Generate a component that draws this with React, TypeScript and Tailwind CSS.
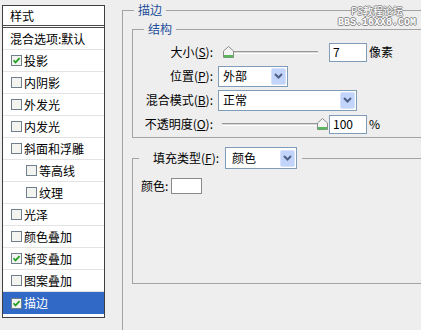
import React from "react";

type Row = { label: string; checked: boolean | null; indent?: boolean; selected?: boolean };

const ROWS: Row[] = [
  { label: "混合选项:默认", checked: null },
  { label: "投影", checked: true },
  { label: "内阴影", checked: false },
  { label: "外发光", checked: false },
  { label: "内发光", checked: false },
  { label: "斜面和浮雕", checked: false },
  { label: "等高线", checked: false, indent: true },
  { label: "纹理", checked: false, indent: true },
  { label: "光泽", checked: false },
  { label: "颜色叠加", checked: false },
  { label: "渐变叠加", checked: true },
  { label: "图案叠加", checked: false },
  { label: "描边", checked: true, selected: true },
];

const CheckBox = ({ checked }: { checked: boolean }) => (
  <svg width="11" height="11" viewBox="0 0 11 11" className="shrink-0">
    <rect x="0.5" y="0.5" width="10" height="10" fill="#f3f3ef" stroke="#6f7f8e" />
    {checked && (
      <path d="M2.5 5.2 L4.5 7.4 L8.6 3.2" stroke="#22a022" strokeWidth="1.7" fill="none" />
    )}
  </svg>
);

const Thumb = () => (
  <svg width="11" height="12" viewBox="0 0 11 12" className="shrink-0">
    <path d="M0.5 5 L5.5 0.5 L10.5 5 L10.5 11.5 L0.5 11.5 Z" fill="#f4f4f4" stroke="#8a8a8a" />
    <rect x="1" y="9" width="9" height="2.5" fill="#57b85c" />
  </svg>
);

const Track = ({ width }: { width: string }) => (
  <div className={`${width} h-[3px] border-t border-t-[#9a9a9a] border-b border-b-white bg-[#d6d6d6]`} />
);

const Chevron = () => (
  <div className="w-[15px] h-[17px] mr-[1px] rounded-[2px] bg-[#c3d4fb] border border-[#d7e2fc] flex items-center justify-center">
    <svg width="9" height="6" viewBox="0 0 9 6">
      <path d="M1 1 L4.5 4.5 L8 1" stroke="#4d6185" strokeWidth="2" fill="none" />
    </svg>
  </div>
);

const Select = ({ value, width }: { value: string; width: string }) => (
  <div className={`${width} h-[21px] border border-[#7f9db9] bg-white flex items-center`}>
    <span className="flex-1 pl-[4px]">{value}</span>
    <Chevron />
  </div>
);

const App = () => {
  return (
    <div className="relative w-[421px] h-[330px] overflow-hidden bg-[#eeeeee] flex text-[12px] leading-[16px] text-black font-['Noto_Sans_CJK_SC',sans-serif]">
      <div className="mt-[5px] ml-[2px] w-[103px] h-[313px] border border-[#3f3f3f] bg-white flex flex-col shrink-0">
        <div className="h-[22px] pl-[7px] flex items-center border-b-[3px] border-double border-[#4a4a4a]">样式</div>
        {ROWS.map((row) => (
          <div
            key={row.label}
            className={`h-[22px] flex items-center gap-[2px] border-b border-[#e3e3e3] ${
              row.checked === null ? "pl-[7px]" : row.indent ? "pl-[23px]" : "pl-[8px]"
            } ${row.selected ? "bg-[#3169c6] text-white border-b-0" : ""}`}
          >
            {row.checked !== null && <CheckBox checked={row.checked} />}
            <span>{row.label}</span>
          </div>
        ))}
      </div>

      <fieldset className="ml-[17px] mt-[2px] w-[320px] h-[340px] shrink-0 border border-[#a3a3a3] pl-[9px]">
        <legend className="ml-[2px] px-[4px] text-[#1f4f9a]">描边</legend>

        <fieldset className="mt-[3px] border border-[#a3a3a3] pl-[9px] pt-[3px] pb-[1px]">
          <legend className="ml-[2px] px-[4px] text-[#1f4f9a]">结构</legend>

          <div className="h-[24px] flex items-center">
            <span className="w-[71px] text-right">
              大小(<u>S</u>):
            </span>
            <div className="ml-[10px] flex items-center">
              <Thumb />
              <Track width="w-[84px]" />
            </div>
            <div className="ml-[11px] w-[38px] h-[19px] border border-[#7f9db9] bg-white pl-[3px] flex items-center">7</div>
            <span className="ml-[2px]">像素</span>
          </div>

          <div className="h-[24px] flex items-center">
            <span className="w-[71px] text-right">
              位置(<u>P</u>):
            </span>
            <div className="ml-[5px]">
              <Select value="外部" width="w-[70px]" />
            </div>
          </div>

          <div className="h-[24px] flex items-center">
            <span className="w-[71px] text-right">
              混合模式(<u>B</u>):
            </span>
            <div className="ml-[5px]">
              <Select value="正常" width="w-[139px]" />
            </div>
          </div>

          <div className="h-[24px] flex items-center">
            <span className="w-[71px] text-right">
              不透明度(<u>O</u>):
            </span>
            <div className="ml-[9px] flex items-center">
              <Track width="w-[95px]" />
              <Thumb />
            </div>
            <div className="ml-[1px] w-[38px] h-[19px] border border-[#7f9db9] bg-white pl-[3px] flex items-center">100</div>
            <span className="ml-[2px]">%</span>
          </div>
        </fieldset>

        <fieldset className="mt-[9px] h-[137px] border border-[#a3a3a3] pl-[6px]">
          <legend className="pl-[14px] pr-[5px] flex items-center">
            <span>
              填充类型(<u>F</u>):
            </span>
            <div className="ml-[6px] w-[72px] h-[22px] border border-[#7f9db9] bg-white flex items-center">
              <span className="flex-1 pl-[6px]">颜色</span>
              <Chevron />
            </div>
          </legend>
          <div className="mt-[9px] pl-[2px] flex items-center">
            <span>颜色:</span>
            <div className="ml-[3px] w-[31px] h-[16px] border border-[#8a8a8a] bg-white" />
          </div>
        </fieldset>
      </fieldset>

      <div className="absolute top-[5px] right-[5px] flex flex-col items-center gap-[2px] text-white [text-shadow:1px_0_0_#8a8a8a,-1px_0_0_#8a8a8a,0_1px_0_#8a8a8a,0_-1px_0_#8a8a8a]">
        <div className="text-[10px] leading-[11px]">PS教程论坛</div>
        <div className="text-[10px] leading-[10px] font-['Liberation_Mono',monospace] font-bold">BBS.16XX8.COM</div>
      </div>
    </div>
  );
};

export default App;
